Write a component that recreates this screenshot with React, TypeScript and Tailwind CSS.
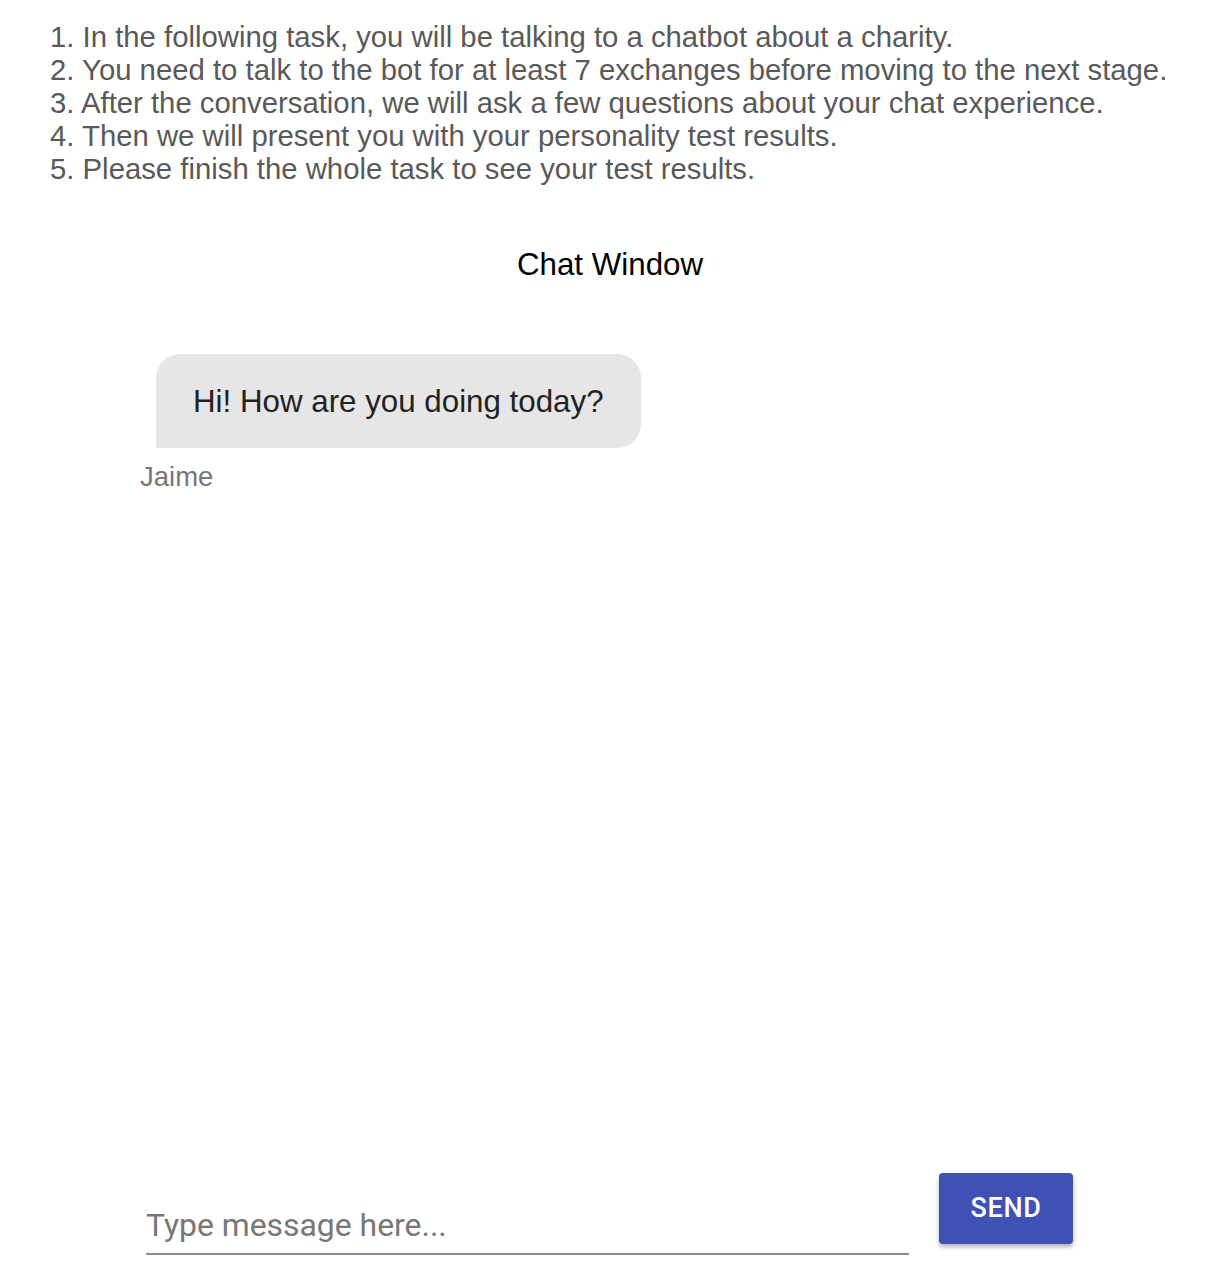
const steps = [
  'In the following task, you will be talking to a chatbot about a charity.',
  'You need to talk to the bot for at least 7 exchanges before moving to the next stage.',
  'After the conversation, we will ask a few questions about your chat experience.',
  'Then we will present you with your personality test results.',
  'Please finish the whole task to see your test results.',
];

export default function App() {
  return (
    <div className="h-[1288px] bg-white flex flex-col font-['Liberation_Sans',Arial,sans-serif]">
      {/* Instructions */}
      <div className="pt-[20px] pl-[50px] text-[29.3px] leading-[33px] text-[#595959]">
        {steps.map((s, i) => (
          <div key={i}>
            {i + 1}. {s}
          </div>
        ))}
      </div>

      <h2 className="mt-[62px] pl-[6px] text-center text-[31.3px] leading-[36px] text-black">Chat Window</h2>

      {/* Messages */}
      <div className="flex-1 pt-[71px] pl-[140px]">
        <div className="flex flex-col items-start">
          <div className="ml-[16px] h-[94px] px-[37px] pt-[2px] flex items-center bg-[#e6e6e6] rounded-[24px] rounded-bl-none text-[31.3px] text-[#222]">
            Hi! How are you doing today?
          </div>
          <div className="mt-[14px] text-[27.5px] leading-[30px] text-[#777]">Jaime</div>
        </div>
      </div>

      {/* Input row */}
      <div className="flex items-end pl-[146px] pb-[33px]">
        <div className="w-[763px] border-b-2 border-[#8a8a8a] pb-[10px]">
          <input
            placeholder="Type message here..."
            className="w-full outline-none bg-transparent text-[31.9px] leading-[36px] font-['Roboto',sans-serif] placeholder:text-[#777] text-[#333]"
          />
        </div>
        <button className="ml-[30px] mb-[11px] w-[134px] h-[71px] rounded-[4px] bg-[#3f51b5] text-white font-['Roboto',sans-serif] font-medium text-[27px] tracking-[0.6px] shadow-[0_3px_4px_rgba(0,0,0,0.3)]">
          SEND
        </button>
      </div>
    </div>
  );
}
